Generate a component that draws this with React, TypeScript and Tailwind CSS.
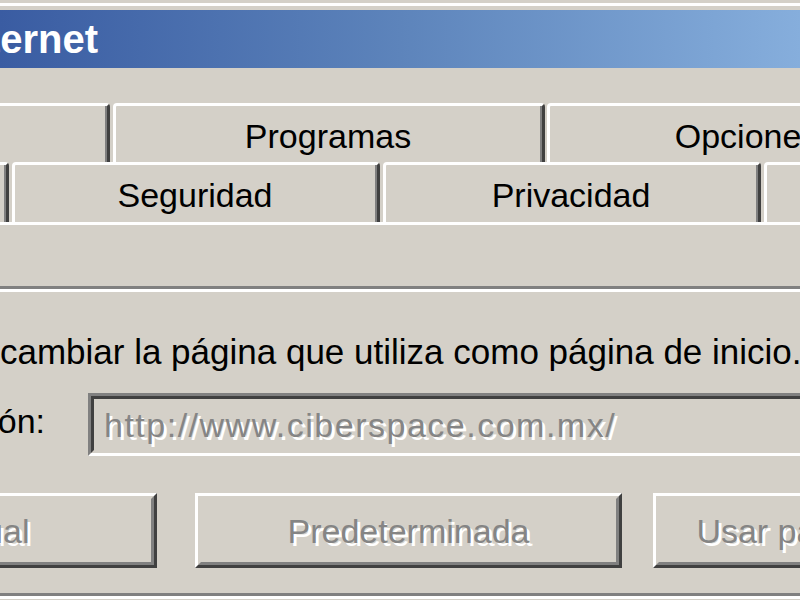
import React from 'react';

const font = "font-['Liberation_Sans',Arial,sans-serif]";

function Tab({ className, label }: { className: string; label: string }) {
  return (
    <div className={`shrink-0 h-full border-t-[3px] border-l-[3px] border-r-[3px] border-t-white border-l-white border-r-[#404040] rounded-tl-[4px] rounded-tr-[4px] ${className}`}>
      <div className="h-full border-r-[2px] border-r-[#808080] flex justify-center pt-[10px]">
        <span className="whitespace-nowrap text-[34px] leading-[40px] text-black">{label}</span>
      </div>
    </div>
  );
}

function Button({ className, label }: { className: string; label: string }) {
  return (
    <div className={`shrink-0 h-full border-[3px] border-t-white border-l-white border-r-[#404040] border-b-[#404040] ${className}`}>
      <div className="h-full border-[3px] border-t-[#d4d0c8] border-l-[#d4d0c8] border-r-[#808080] border-b-[#808080] flex items-center justify-center">
        <span className="whitespace-nowrap text-[34px] leading-[40px] text-[#858585] [text-shadow:3px_3px_0_#ffffff]">{label}</span>
      </div>
    </div>
  );
}

export default function App() {
  return (
    <div className={`w-[800px] h-[600px] overflow-hidden bg-[#d4d0c8] flex flex-col ${font}`}>
      {/* window frame */}
      <div className="h-[10px] shrink-0 pt-[3px]">
        <div className="h-[3px] bg-white" />
      </div>

      {/* title bar */}
      <div className="h-[58px] shrink-0 flex items-center bg-gradient-to-r from-[#3a5ca2] via-[#5d84bb] to-[#86aedc]">
        <div className="w-[98px] flex justify-end">
          <span className="whitespace-nowrap text-[40px] leading-[46px] font-bold text-white">Opciones de Internet</span>
        </div>
      </div>

      <div className="h-[35px] shrink-0" />

      {/* tab rows */}
      <div className="h-[59px] shrink-0 flex -ml-[290px] gap-[3px]">
        <Tab className="w-[400px]" label="Conexiones" />
        <Tab className="w-[432px]" label="Programas" />
        <Tab className="w-[575px] ml-[-1px]" label="Opciones avanzadas" />
      </div>
      <div className="h-[60px] shrink-0 flex -ml-[389px] gap-[3px]">
        <Tab className="w-[398px]" label="General" />
        <Tab className="w-[368px]" label="Seguridad" />
        <Tab className="w-[378px]" label="Privacidad" />
        <Tab className="w-[300px]" label="Contenido" />
      </div>

      {/* panel */}
      <div className="h-[3px] shrink-0 bg-white" />
      <div className="h-[61px] shrink-0" />

      {/* group box: Página de inicio */}
      <div className="h-[3px] shrink-0 bg-[#808080]" />
      <div className="h-[3px] shrink-0 bg-white" />

      <div className="shrink-0 pt-[40px] -ml-[111px] whitespace-nowrap text-[35px] leading-[40px] text-black">
        Puede cambiar la página que utiliza como página de inicio.
      </div>

      <div className="shrink-0 mt-[21px] h-[63px] flex items-start">
        <div className="w-[45px] shrink-0 flex justify-end mt-[8px]">
          <span className="whitespace-nowrap text-[34px] leading-[40px] text-black">Dirección:</span>
        </div>
        <div className="ml-[43px] w-[800px] shrink-0 h-full border-[3px] border-t-[#808080] border-l-[#808080] border-r-white border-b-white">
          <div className="h-full border-[3px] border-t-[#404040] border-l-[#404040] border-r-[#d4d0c8] border-b-[#d4d0c8] flex items-center pl-[10px]">
            <span className="whitespace-nowrap text-[34px] leading-[40px] tracking-[1.5px] text-[#858585] [text-shadow:3px_3px_0_#ffffff]">http://www.ciberspace.com.mx/</span>
          </div>
        </div>
      </div>

      <div className="shrink-0 mt-[37px] h-[75px] flex -ml-[270px]">
        <Button className="w-[427px]" label="Usar actual" />
        <Button className="w-[427px] ml-[38px]" label="Predeterminada" />
        <Button className="w-[427px] ml-[31px]" label="Usar página en blanco" />
      </div>

      <div className="h-[25px] shrink-0" />
      <div className="h-[3px] shrink-0 bg-[#808080]" />
      <div className="h-[3px] shrink-0 bg-white" />
    </div>
  );
}
